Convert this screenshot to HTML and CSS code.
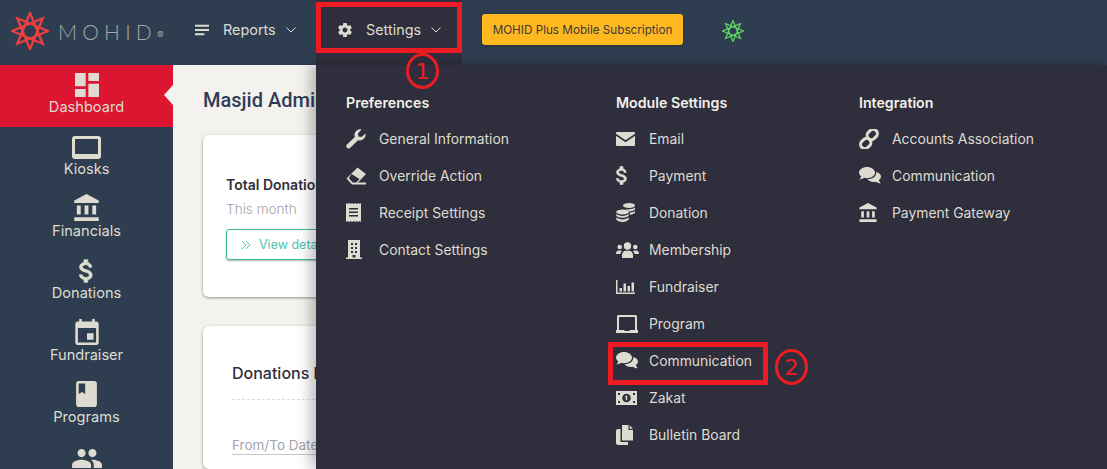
FILE: index.html
```html
<!DOCTYPE html>
<html lang="en">
<head>
  <meta charset="UTF-8">
  <meta name="viewport" content="width=device-width, initial-scale=1.0">
  <title>MOHID</title>
  <link rel="stylesheet" href="styles.css">
</head>
<body>
<svg class="sprite" xmlns="http://www.w3.org/2000/svg">
  <symbol id="i-dashboard" viewBox="3 3 18 18"><path d="M3 13h8V3H3v10zm0 8h8v-6H3v6zm10 0h8V11h-8v10zm0-18v6h8V3h-8z"/></symbol>
  <symbol id="i-kiosk" viewBox="0 0 29 23"><path fill-rule="evenodd" d="M3 0h23a3 3 0 0 1 3 3v17a3 3 0 0 1-3 3H3a3 3 0 0 1-3-3V3a3 3 0 0 1 3-3zm0 3v15h23V3z"/></symbol>
  <symbol id="i-bank" viewBox="2 1 19 21"><path d="M4 10v7h3v-7H4zm6 0v7h3v-7h-3zM2 22h19v-3H2v3zm14-12v7h3v-7h-3zm-4.500-9L2 6v2h19V6l-9.500-5z"/></symbol>
  <symbol id="i-dollar" viewBox="6 3 12 18"><path d="M11.800 10.900c-2.270-.59-3-1.200-3-2.150 0-1.090 1.010-1.850 2.700-1.850 1.780 0 2.440.85 2.500 2.100h2.210c-.07-1.720-1.120-3.300-3.210-3.810V3h-3v2.160c-1.940.42-3.500 1.680-3.500 3.610 0 2.310 1.910 3.460 4.700 4.130 2.500.6 3 1.480 3 2.410 0 .69-.49 1.790-2.700 1.790-2.060 0-2.870-.92-2.980-2.100h-2.200c.12 2.190 1.760 3.420 3.680 3.830V21h3v-2.150c1.950-.37 3.500-1.500 3.500-3.550 0-2.840-2.430-3.810-4.700-4.400z" stroke="currentColor" stroke-width=".6"/></symbol>
  <symbol id="i-event" viewBox="3 1 18 20"><path d="M17 12h-5v5h5v-5zM16 1v2H8V1H6v2H5c-1.110 0-1.990.9-1.990 2L3 19c0 1.100.89 2 2 2h14c1.100 0 2-.9 2-2V5c0-1.100-.9-2-2-2h-1V1h-2zm3 18H5V8h14v11z"/></symbol>
  <symbol id="i-book" viewBox="4 2 16 20"><path d="M18 2H6c-1.100 0-2 .9-2 2v16c0 1.100.9 2 2 2h12c1.100 0 2-.9 2-2V4c0-1.100-.9-2-2-2zM6 4h5v8l-2.500-1.500L6 12V4z"/></symbol>
  <symbol id="i-people" viewBox="1 5 22 14"><path d="M16 11c1.660 0 2.990-1.340 2.990-3S17.660 5 16 5c-1.660 0-3 1.340-3 3s1.340 3 3 3zm-8 0c1.660 0 2.990-1.340 2.990-3S9.660 5 8 5C6.340 5 5 6.340 5 8s1.340 3 3 3zm0 2c-2.330 0-7 1.170-7 3.500V19h14v-2.500c0-2.330-4.670-3.500-7-3.500zm8 0c-.29 0-.62.02-.97.05 1.160.84 1.970 1.970 1.970 3.450V19h6v-2.500c0-2.330-4.670-3.500-7-3.500z"/></symbol>
  <symbol id="i-gear" viewBox="2 2 20 20"><path d="M19.430 12.980c.04-.32.07-.64.07-.98s-.03-.66-.07-.98l2.110-1.650c.19-.15.24-.42.12-.64l-2-3.460c-.12-.22-.39-.3-.61-.22l-2.490 1c-.52-.4-1.080-.73-1.690-.98l-.38-2.650C14.460 2.180 14.250 2 14 2h-4c-.25 0-.46.18-.49.42l-.38 2.650c-.61.25-1.170.59-1.690.98l-2.490-1c-.23-.09-.49 0-.61.22l-2 3.460c-.13.22-.07.49.12.64l2.110 1.650c-.04.32-.07.65-.07.98s.03.66.07.98l-2.110 1.650c-.19.15-.24.42-.12.64l2 3.460c.12.22.39.3.61.22l2.490-1c.52.4 1.080.73 1.690.98l.38 2.650c.03.24.24.42.49.42h4c.25 0 .46-.18.49-.42l.38-2.650c.61-.25 1.170-.59 1.690-.98l2.490 1c.23.09.49 0 .61-.22l2-3.460c.12-.22.07-.49-.12-.64l-2.110-1.650zM12 15.500c-1.930 0-3.500-1.570-3.500-3.500s1.570-3.500 3.500-3.500 3.500 1.570 3.500 3.500-1.570 3.500-3.500 3.500z"/></symbol>
  <symbol id="i-lines" viewBox="0 0 15 11"><path d="M0 0h15v2H0zM0 4.500h15v2H0zM0 9h10v2H0z"/></symbol>
  <symbol id="i-chevron" viewBox="0 0 10 6"><path d="M.5.5 5 5 9.500.5" fill="none" stroke="currentColor" stroke-width="1"/></symbol>
  <symbol id="i-wrench" viewBox="0 0 20 20"><path d="M19.500 4.500 15.500 8l-3-.5-.5-3L15.500.5C12-.3 8.500 2.500 8.500 6c0 .8.1 1.300.3 1.900L1 15.500a2.300 2.300 0 0 0 3.300 3.300l7.700-7.600c.7.2 1.200.3 1.900.3 3.500 0 6.300-3.500 5.600-7z"/></symbol>
  <symbol id="i-eraser" viewBox="0 0 20 17"><path fill-rule="evenodd" d="M11.500 0 20 6.500 12 15h8v2H6L.5 11zM5.500 6.500 2.800 10.800 6.800 15h3.700l3-3.500z"/></symbol>
  <symbol id="i-receipt" viewBox="0 0 15 19"><path fill-rule="evenodd" d="M0 0l1.500 1L3 0l1.500 1L6 0l1.500 1L9 0l1.500 1L12 0l1.500 1L15 0v19l-1.500-1-1.500 1-1.500-1L9 19l-1.500-1L6 19l-1.500-1L3 19l-1.500-1L0 19zM3 5v1.500h9V5zm0 3.500V10h9V8.500zm0 3.500v1.500h9V12z"/></symbol>
  <symbol id="i-building" viewBox="0 0 16 19"><path fill-rule="evenodd" d="M2 0h12v17.500h2V19H0v-1.500h2zM5 3v2h2V3zm4 0v2h2V3zM5 7v2h2V7zm4 0v2h2V7zm-4 4v2h2v-2zm4 0v2h2v-2zm-2.500 4v2.500h3V15z"/></symbol>
  <symbol id="i-mail" viewBox="0 0 19 14"><path d="M1 0h17a1 1 0 0 1 1 1v.8L9.500 8.200 0 1.800V1a1 1 0 0 1 1-1zM0 3.800l9.500 6.400L19 3.800V13a1 1 0 0 1-1 1H1a1 1 0 0 1-1-1z"/></symbol>
  <symbol id="i-coins" viewBox="0 0 19 19"><ellipse cx="13" cy="2.500" rx="6" ry="2.500"/><path d="M8 5.600c1.500.8 3.500 1 5 .8 2.500-.1 5-.8 6-1.800v1.900c-1 1.200-4 2-6.800 2-.9-1.200-2.600-2.200-4.200-2.900zM13.500 9.700c2.200-.2 4.500-.9 5.500-1.800v1.800c-.8 1-3 1.800-5 2z"/><ellipse cx="6.500" cy="9" rx="6.300" ry="2.500"/><path d="M.2 10.800c1.300 1.500 4 2.100 6.300 2.100s5-.6 6.300-2.100v1.700c-1 1.500-3.800 2.200-6.300 2.200s-5.300-.7-6.300-2.200zM.2 14.300c1.300 1.500 4 2.100 6.300 2.100s5-.6 6.300-2.100v2c-1 1.800-3.800 2.700-6.300 2.700s-5.300-.9-6.300-2.700z"/></symbol>
  <symbol id="i-users" viewBox="0 0 23 16"><circle cx="11.500" cy="4" r="3.700"/><circle cx="3.700" cy="5" r="2.300"/><circle cx="19.300" cy="5" r="2.300"/><path d="M6 16v-3c0-2.500 2-4.200 3.500-4.200h4c1.500 0 3.500 1.700 3.500 4.200v3zM0 12c0-2 1-3.500 2.500-3.500h2.300c.4 0 .9.200 1.200.5C5 10 4.500 11 4.300 12zM23 12c0-2-1-3.500-2.500-3.500h-2.300c-.4 0-.9.200-1.200.5 1 1 1.500 2 1.700 3z"/></symbol>
  <symbol id="i-chart" viewBox="0 0 19 14"><path d="M0 0h1.500v12.500H19V14H0zM3.500 8H6v3.500H3.500zM7.500 3.500H10v8H7.500zM11.500 6H14v5.500h-2.500zM15.500 2.500H18v9h-2.500z"/></symbol>
  <symbol id="i-laptop" viewBox="0 0 22 18"><path fill-rule="evenodd" d="M2.500 0h17A1.500 1.500 0 0 1 21 1.500V15h1v3H0v-3h1V1.500A1.500 1.500 0 0 1 2.500 0zm.5 2v13h5.500v1h5v-1H19V2z"/></symbol>
  <symbol id="i-chat" viewBox="0 0 22 17"><path d="M8 0c4.400 0 8 2.500 8 5.600s-3.600 5.600-8 5.600c-1 0-2-.1-2.900-.4C3.800 11.800 2 12.400.4 12.300c1-.8 1.600-1.800 1.800-2.900C.8 8.400 0 7.100 0 5.600 0 2.500 3.600 0 8 0z"/><path d="M17.300 5c2.700.6 4.700 2.400 4.700 4.500 0 1.400-.8 2.600-2.100 3.500.2 1.200.9 2.300 1.900 3.300-1.800 0-3.500-.6-4.700-1.600-.7.200-1.400.3-2.100.3-2.900 0-5.400-1.300-6.400-3.100 4.700.2 9-2.500 8.700-7z"/></symbol>
  <symbol id="i-money" viewBox="0 0 21 14"><path fill-rule="evenodd" d="M0 0h21v14H0zM2 2v2h2V2zm15 0v2h2V2zM2 10v2h2v-2zm15 0v2h2v-2zM10.500 2.700a4.300 4.300 0 1 0 0 8.600 4.300 4.300 0 0 0 0-8.600zm-.9 2h1.600v4.600h-1.400V6.200h-.9z"/></symbol>
  <symbol id="i-copy" viewBox="0 0 17 20"><path d="M6 0h6.500v5H17v10.500H6zM13.700.3 17 3.700h-3.300z"/><path d="M4.500 4v13H12v3H2a2 2 0 0 1-2-2V6a2 2 0 0 1 2-2z"/></symbol>
  <symbol id="i-link" viewBox="0 0 20 20"><g fill="none" stroke="currentColor" stroke-width="3"><rect x="9" y="0" width="8.500" height="11" rx="4.200" transform="rotate(45 13.250 5.500)"/><rect x="2.500" y="9" width="8.500" height="11" rx="4.200" transform="rotate(45 6.750 14.500)"/></g></symbol>
  <symbol id="i-star" viewBox="0 0 40 40"><path fill="none" stroke="currentColor" stroke-width="2.400" d="M20 1 33.400 33.400 1 20 33.400 6.600 20 39 6.600 6.600 39 20 6.600 33.400Z"/></symbol>
</svg>

<header class="topbar">
  <div class="brand">
    <svg class="brand-star"><use href="#i-star"/></svg>
    <span class="brand-name">MOHID</span><span class="brand-reg">®</span>
  </div>
  <nav class="topnav">
    <a class="topnav-item" href="#">
      <svg class="topnav-icon"><use href="#i-lines"/></svg>Reports
      <svg class="topnav-chevron"><use href="#i-chevron"/></svg>
    </a>
    <a class="topnav-item active" href="#">
      <svg class="topnav-icon"><use href="#i-gear"/></svg>Settings
      <svg class="topnav-chevron"><use href="#i-chevron"/></svg>
    </a>
  </nav>
  <button class="subscribe-btn">MOHID Plus Mobile Subscription</button>
  <svg class="status-star"><use href="#i-star"/></svg>
</header>

<div class="layout">
  <aside class="sidebar">
    <a class="side-item active" href="#"><svg class="side-icon s-dash"><use href="#i-dashboard"/></svg>Dashboard</a>
    <a class="side-item" href="#"><svg class="side-icon s-kiosk"><use href="#i-kiosk"/></svg>Kiosks</a>
    <a class="side-item" href="#"><svg class="side-icon s-bank"><use href="#i-bank"/></svg>Financials</a>
    <a class="side-item" href="#"><svg class="side-icon s-dollar"><use href="#i-dollar"/></svg>Donations</a>
    <a class="side-item" href="#"><svg class="side-icon s-event"><use href="#i-event"/></svg>Fundraiser</a>
    <a class="side-item" href="#"><svg class="side-icon s-book"><use href="#i-book"/></svg>Programs</a>
    <a class="side-item side-cut" href="#"><svg class="side-icon s-people"><use href="#i-people"/></svg></a>
  </aside>

  <main class="content">
    <h1 class="page-title">Masjid Administration</h1>
    <section class="card card-total">
      <h3>Total Donations</h3>
      <p>This month</p>
      <a class="details-btn" href="#">
        <svg class="details-arrows" viewBox="0 0 11 10"><path d="M1 1l4 4-4 4M5 1l4 4-4 4" fill="none" stroke="currentColor"/></svg>View details
      </a>
    </section>
    <section class="card card-chart">
      <h2>Donations by Month</h2>
      <div class="date-field">From/To Date</div>
    </section>
  </main>
</div>

<div class="megamenu">
  <div class="menu-col col-pref">
    <h4>Preferences</h4>
    <a href="#"><span class="menu-icon"><svg class="m-20"><use href="#i-wrench"/></svg></span>General Information</a>
    <a href="#"><span class="menu-icon"><svg class="m-20"><use href="#i-eraser"/></svg></span>Override Action</a>
    <a href="#"><span class="menu-icon"><svg class="m-15"><use href="#i-receipt"/></svg></span>Receipt Settings</a>
    <a href="#"><span class="menu-icon"><svg class="m-16"><use href="#i-building"/></svg></span>Contact Settings</a>
  </div>
  <div class="menu-col col-module">
    <h4>Module Settings</h4>
    <a href="#"><span class="menu-icon"><svg class="m-mail"><use href="#i-mail"/></svg></span>Email</a>
    <a href="#"><span class="menu-icon"><svg class="m-dollar"><use href="#i-dollar"/></svg></span>Payment</a>
    <a href="#"><span class="menu-icon"><svg class="m-19"><use href="#i-coins"/></svg></span>Donation</a>
    <a href="#"><span class="menu-icon"><svg class="m-users"><use href="#i-users"/></svg></span>Membership</a>
    <a href="#"><span class="menu-icon"><svg class="m-chart"><use href="#i-chart"/></svg></span>Fundraiser</a>
    <a href="#"><span class="menu-icon"><svg class="m-laptop"><use href="#i-laptop"/></svg></span>Program</a>
    <a href="#"><span class="menu-icon"><svg class="m-chat"><use href="#i-chat"/></svg></span>Communication</a>
    <a href="#"><span class="menu-icon"><svg class="m-money"><use href="#i-money"/></svg></span>Zakat</a>
    <a href="#"><span class="menu-icon"><svg class="m-copy"><use href="#i-copy"/></svg></span>Bulletin Board</a>
  </div>
  <div class="menu-col col-integration">
    <h4>Integration</h4>
    <a href="#"><span class="menu-icon"><svg class="m-20"><use href="#i-link"/></svg></span>Accounts Association</a>
    <a href="#"><span class="menu-icon"><svg class="m-chat"><use href="#i-chat"/></svg></span>Communication</a>
    <a href="#"><span class="menu-icon"><svg class="m-bank"><use href="#i-bank"/></svg></span>Payment Gateway</a>
  </div>
</div>

<!-- red callouts drawn over the screenshot -->
<div class="callout-box box-settings"></div>
<div class="callout-num num-one">1</div>
<div class="callout-box box-comm"></div>
<div class="callout-num num-two">2</div>
</body>
</html>
```

FILE: styles.css
```css
* {
  box-sizing: border-box;
}
html, body {
  height: 469px;
  overflow: hidden;
}
body {
  margin: 0;
  position: relative;
  font-family: 'Inter', sans-serif;
  background: #f3f2ef;
  color: #dedcd0;
}
a {
  text-decoration: none;
  color: inherit;
}
.sprite {
  display: none;
}
svg {
  fill: currentColor;
  display: block;
}

/* Top bar */
.topbar {
  display: flex;
  align-items: center;
  height: 65px;
  background: #2e3e50;
}
.brand {
  display: flex;
  align-items: center;
  width: 179px;
  padding-left: 11px;
  margin-bottom: 3px;
  flex-shrink: 0;
}
.brand-star {
  width: 38px;
  height: 38px;
  color: #ef3e42;
  margin-right: 9px;
}
.brand-name {
  font-family: 'Lato', sans-serif;
  font-weight: 300;
  font-size: 21px;
  letter-spacing: 5.2px;
  color: #a3a5a6;
}
.brand-reg {
  font-size: 10px;
  color: #a3a5a6;
  margin-top: 7px;
}
.topnav {
  display: flex;
  height: 65px;
}
.topnav-item {
  display: flex;
  align-items: center;
  width: 137px;
  padding: 0 0 6px 16px;
  font-size: 14.4px;
  color: #dedcd0;
}
.topnav-item.active {
  width: 146px;
  padding-left: 22px;
  background: #2f2e3c;
}
.topnav-icon {
  width: 14px;
  height: 14px;
  margin-right: 14px;
}
.topnav-chevron {
  width: 10px;
  height: 6px;
  margin-left: 10px;
}
.subscribe-btn {
  margin: 0 0 6px 20px;
  width: 201px;
  height: 31px;
  padding: 0;
  border: none;
  border-radius: 3px;
  background: #ffb81f;
  color: #3b3a3a;
  font-family: 'Inter', sans-serif;
  font-size: 11.7px;
  box-shadow: 0 1px 3px rgba(0, 0, 0, .3);
}
.status-star {
  width: 22px;
  height: 22px;
  margin: 0 0 3px 39px;
  color: #5fd160;
}

/* Sidebar and page */
.layout {
  display: flex;
  height: 404px;
}
.sidebar {
  width: 173px;
  flex-shrink: 0;
  background: #2e3e50;
}
.side-item {
  position: relative;
  display: flex;
  flex-direction: column;
  align-items: center;
  justify-content: flex-end;
  height: 62px;
  padding-bottom: 12px;
  font-size: 14.6px;
  line-height: 16px;
}
.side-item.active {
  background: #dc1531;
}
.side-item.active::after {
  content: "";
  position: absolute;
  right: 0;
  top: 20px;
  width: 9px;
  height: 20px;
  background: #f3f2ef;
  clip-path: polygon(100% 0, 0 50%, 100% 100%);
}
.side-item.side-cut {
  height: 32px;
  padding: 12px 0 0;
  justify-content: flex-start;
}
.side-icon {
  margin-bottom: 2px;
}
.s-dash { width: 24px; height: 24px; }
.s-kiosk { width: 29px; height: 23px; }
.s-bank { width: 25px; height: 27px; }
.s-dollar { width: 15px; height: 24px; }
.s-event { width: 24px; height: 26px; }
.s-book { width: 21px; height: 26px; }
.s-people { width: 30px; height: 19px; margin: 0; }

.content {
  width: 143px;
  flex-shrink: 0;
  overflow: hidden;
  padding: 23px 0 0 30px;
}
.page-title {
  margin: 0 0 23px;
  font-family: 'Roboto', sans-serif;
  font-weight: 500;
  font-size: 20px;
  line-height: 24px;
  color: #2f3c58;
  white-space: nowrap;
}
.card {
  width: 500px;
  background: #fff;
  border-radius: 6px;
  box-shadow: 0 1px 3px rgba(0, 0, 0, .4);
  color: #2f2e3c;
}
.card-total {
  height: 162px;
  padding: 41px 23px 0;
}
.card-total h3 {
  margin: 0;
  font-size: 14px;
  line-height: 18px;
  font-weight: 600;
  white-space: nowrap;
}
.card-total p {
  margin: 6px 0 11px;
  font-size: 13.6px;
  line-height: 18px;
  font-weight: 300;
  color: #a5a3ad;
}
.details-btn {
  display: flex;
  align-items: center;
  width: 130px;
  height: 31px;
  padding-left: 14px;
  border: 1px solid #3fb8a0;
  border-radius: 3px;
  box-shadow: 0 1px 2px rgba(0, 0, 0, .3);
  font-size: 12.5px;
  color: #52c2ab;
}
.details-arrows {
  width: 11px;
  height: 10px;
  margin-right: 7px;
  fill: none;
}
.card-chart {
  height: 143px;
  margin-top: 29px;
  padding: 35px 29px 0;
}
.card-chart h2 {
  margin: 0;
  padding-bottom: 14px;
  font-size: 16px;
  line-height: 24px;
  font-weight: 500;
  border-bottom: 1px dashed #ddd;
  white-space: nowrap;
}
.date-field {
  margin-top: 37px;
  padding-bottom: 1px;
  border-bottom: 1px solid #c8c8c8;
  font-size: 13.5px;
  color: #a5a3ad;
}

/* Settings dropdown */
.megamenu {
  position: absolute;
  left: 316px;
  right: 0;
  top: 65px;
  bottom: 0;
  display: flex;
  background: #2f2e3c;
  box-shadow: -6px 0 12px rgba(0, 0, 0, .25);
}
.menu-col {
  padding-top: 29px;
  flex-shrink: 0;
}
.col-pref { margin-left: 30px; width: 270px; }
.col-module { width: 243px; }
.menu-col h4 {
  margin: 0 0 8px;
  font-size: 14.2px;
  line-height: 18px;
  font-weight: 600;
  color: #f2f1ea;
}
.menu-col a {
  display: flex;
  align-items: center;
  height: 37px;
  font-size: 13.9px;
  white-space: nowrap;
}
.menu-icon {
  display: flex;
  width: 33px;
  flex-shrink: 0;
}
.m-20 { width: 20px; height: 20px; }
.m-15 { width: 15px; height: 19px; }
.m-16 { width: 16px; height: 19px; }
.m-19 { width: 19px; height: 19px; }
.m-mail { width: 19px; height: 14px; }
.m-dollar { width: 12px; height: 19px; }
.m-users { width: 23px; height: 16px; }
.m-chart { width: 19px; height: 14px; }
.m-laptop { width: 22px; height: 18px; }
.m-chat { width: 22px; height: 17px; }
.m-money { width: 21px; height: 14px; }
.m-copy { width: 17px; height: 20px; }
.m-bank { width: 18px; height: 19px; }

/* Callouts */
.callout-box {
  position: absolute;
  border: 5px solid #ed1c24;
}
.box-settings {
  left: 316px;
  top: 2px;
  width: 146px;
  height: 51px;
}
.box-comm {
  left: 608px;
  top: 342px;
  width: 160px;
  height: 43px;
}
.callout-num {
  position: absolute;
  display: flex;
  align-items: center;
  justify-content: center;
  width: 33px;
  height: 36px;
  border: 3px solid #ed1c24;
  border-radius: 50%;
  font-family: 'DejaVu Sans', sans-serif;
  font-size: 22px;
  color: #ed1c24;
}
.num-one { left: 406px; top: 53px; }
.num-two { left: 775px; top: 349px; }
```
